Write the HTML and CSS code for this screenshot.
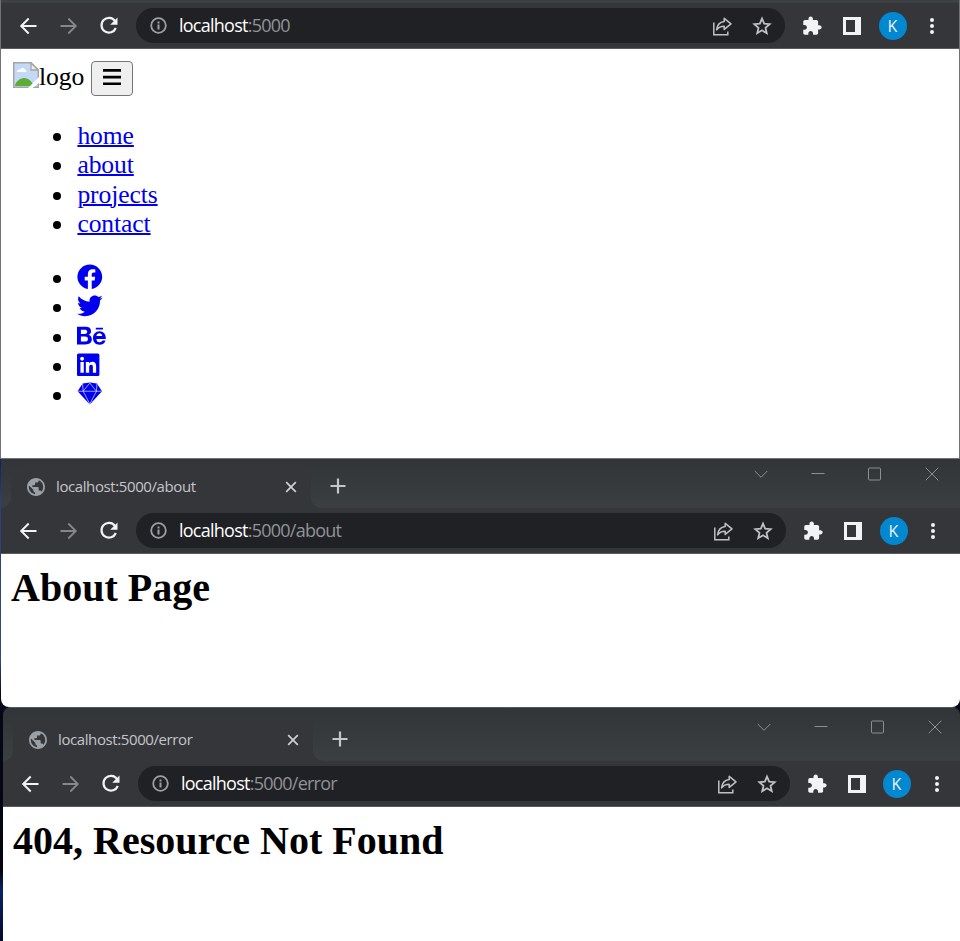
FILE: index.html
```html
<!DOCTYPE html>
<html lang="en">
<head>
<meta charset="utf-8">
<title>localhost:5000</title>
<link rel="stylesheet" href="styles.css">
</head>
<body>
<svg class="sprite" width="0" height="0" aria-hidden="true">
  <symbol id="back" viewBox="0 0 24 24"><path d="M20.500 12H5.500M12.700 4.500L5.200 12l7.500 7.500" fill="none" stroke="currentColor" stroke-width="2"/></symbol>
  <symbol id="forward" viewBox="0 0 24 24"><path d="M3.500 12h15M11.300 4.500l7.500 7.500-7.500 7.500" fill="none" stroke="currentColor" stroke-width="1.800"/></symbol>
  <symbol id="reload" viewBox="0 0 24 24"><path d="M18 7A7.400 7.400 0 1 0 18.800 14" fill="none" stroke="currentColor" stroke-width="2.200"/><path d="M20.500 3.500v7.300h-7.300z" fill="currentColor"/></symbol>
  <symbol id="info" viewBox="0 0 18 18"><circle cx="8.500" cy="8.500" r="7.300" fill="none" stroke="currentColor" stroke-width="1.800"/><path d="M7.500 7.500h2v5h-2zM7.500 4.500h2v1.900h-2z" fill="currentColor"/></symbol>
  <symbol id="share" viewBox="0 0 24 24"><path d="M3.800 8.500v12.200h14V17.500" fill="none" stroke="currentColor" stroke-width="1.500"/><path d="M14.200 4.300l6.800 5.500-6.800 5.600v-3.200c-3.700 0-5.800 1-7.600 3.700.4-4.900 3-7.700 7.600-8.400z" fill="none" stroke="currentColor" stroke-width="1.500" stroke-linejoin="round"/></symbol>
  <symbol id="star" viewBox="0 0 24 24"><path d="M12 4.600l2.150 5.100 5.500.5-4.150 3.600 1.250 5.400L12 16.350 7.250 19.200l1.250-5.400-4.150-3.600 5.500-.5z" fill="none" stroke="currentColor" stroke-width="1.800"/></symbol>
  <symbol id="puzzle" viewBox="0 0 24 24"><path fill="currentColor" d="M20.5 11H19V7c0-1.100-.9-2-2-2h-4V3.500C13 2.120 11.880 1 10.500 1S8 2.120 8 3.500V5H4c-1.100 0-1.990.9-1.990 2v3.800H3.500c1.490 0 2.700 1.210 2.700 2.700s-1.210 2.700-2.700 2.700H2V20c0 1.100.9 2 2 2h3.800v-1.500c0-1.490 1.210-2.700 2.700-2.700s2.700 1.210 2.700 2.700V22H17c1.100 0 2-.9 2-2v-4h1.500c1.380 0 2.500-1.120 2.500-2.500S21.880 11 20.500 11z"/></symbol>
  <symbol id="panel" viewBox="0 0 24 24"><path fill="currentColor" fill-rule="evenodd" d="M3 3h18v18H3zM6 6v12h9V6z"/></symbol>
  <symbol id="dots" viewBox="0 0 24 24"><g fill="currentColor"><circle cx="12" cy="6" r="2"/><circle cx="12" cy="12" r="2"/><circle cx="12" cy="18" r="2"/></g></symbol>
  <symbol id="globe" viewBox="2 2 20 20"><path fill="currentColor" d="M12 2C6.480 2 2 6.480 2 12s4.480 10 10 10 10-4.480 10-10S17.520 2 12 2zm-1 17.930c-3.950-.49-7-3.850-7-7.930 0-.62.08-1.210.21-1.790L9 15v1c0 1.100.9 2 2 2v1.930zm6.900-2.540c-.26-.81-1-1.390-1.900-1.390h-1v-3c0-.55-.45-1-1-1H8v-2h2c.55 0 1-.45 1-1V7h2c1.100 0 2-.9 2-2v-.41c2.930 1.190 5 4.060 5 7.410 0 2.080-.8 3.970-2.100 5.390z"/></symbol>
  <symbol id="close" viewBox="0 0 12 12"><path d="M1.200 1.200l9.600 9.600M10.800 1.200L1.200 10.800" stroke="currentColor" stroke-width="1.700"/></symbol>
  <symbol id="plus" viewBox="0 0 16 16"><path d="M8 .5v15M.5 8h15" stroke="currentColor" stroke-width="2.200"/></symbol>
  <symbol id="w-chevron" viewBox="0 0 14 14"><path d="M.7 4l6.300 6.300L13.300 4" fill="none" stroke="currentColor"/></symbol>
  <symbol id="w-min" viewBox="0 0 14 14"><path d="M.5 6.500h13" stroke="currentColor"/></symbol>
  <symbol id="w-max" viewBox="0 0 14 14"><rect x=".5" y="1" width="12" height="12" rx="1" fill="none" stroke="currentColor"/></symbol>
  <symbol id="w-close" viewBox="0 0 14 14"><path d="M.7.7l12.600 12.600M13.300.7L.7 13.300" stroke="currentColor"/></symbol>
</svg>

<section class="window window-home">
  <div class="strip-edge"></div>
  <div class="toolbar">
    <svg class="ico back"><use href="#back"/></svg>
    <svg class="ico forward"><use href="#forward"/></svg>
    <svg class="ico reload"><use href="#reload"/></svg>
    <div class="omnibox">
      <svg class="info"><use href="#info"/></svg>
      <div class="url"><b>localhost</b>:5000</div>
      <svg class="ico"><use href="#share"/></svg>
      <svg class="ico star"><use href="#star"/></svg>
    </div>
    <svg class="ico puzzle"><use href="#puzzle"/></svg>
    <svg class="ico panel"><use href="#panel"/></svg>
    <div class="avatar">K</div>
    <svg class="ico dots"><use href="#dots"/></svg>
  </div>
  <main class="page">
    <div class="nav-head">
      <svg class="broken" viewBox="0 0 26 26">
        <path d="M1 1h17l7 7v17H1z" fill="#c5d8f6"/>
        <path d="M4 10c0-2 2-3 3-2 1-3 5-2 5 0 2 0 2 2 1 2z" fill="#fff"/>
        <path d="M2 24c0-4 5-8 9-8 5 0 8 4 10 8z" fill="#5aad35"/>
        <path d="M.7 .7H18l7.300 7.300v17.300H.7z" fill="none" stroke="#a5a5a5" stroke-width="1.500"/>
        <path d="M18 1v7h7z" fill="#eee" stroke="#a5a5a5" stroke-width="1.300"/>
        <path d="M26 15L15 26h4.500l6.500-5z" fill="#fff"/>
      </svg>
      <span class="alt">logo</span>
      <button class="toggle" aria-label="Menu"><svg viewBox="0 0 20 18"><path d="M1 2.400h18M1 9.100h18M1 15.800h18" stroke="#000" stroke-width="2.600"/></svg></button>
    </div>
    <ul class="links">
      <li><a href="#">home</a></li>
      <li><a href="#">about</a></li>
      <li><a href="#">projects</a></li>
      <li><a href="#">contact</a></li>
    </ul>
    <ul class="social">
      <li><svg class="brand" viewBox="0 0 512 512"><path d="M504 256C504 119 393 8 256 8S8 119 8 256c0 123.780 90.690 226.380 209.250 245V327.690h-63V256h63v-54.640c0-62.150 37-96.480 93.670-96.480 27.140 0 55.520 4.840 55.520 4.840v61h-31.280c-30.800 0-40.410 19.120-40.410 38.730V256h68.780l-11 71.690h-57.780V501C413.310 482.380 504 379.780 504 256z"/></svg></li>
      <li><svg class="brand" viewBox="0 0 512 512"><path d="M459.370 151.716c.325 4.548.325 9.097.325 13.645 0 138.720-105.583 298.558-298.558 298.558-59.452 0-114.680-17.219-161.137-47.106 8.447.974 16.568 1.299 25.340 1.299 49.055 0 94.213-16.568 130.274-44.832-46.132-.975-84.792-31.188-98.112-72.772 6.498.974 12.995 1.624 19.818 1.624 9.421 0 18.843-1.300 27.614-3.573-48.081-9.747-84.143-51.980-84.143-102.985v-1.299c13.969 7.797 30.214 12.670 47.431 13.319-28.264-18.843-46.781-51.005-46.781-87.391 0-19.492 5.197-37.360 14.294-52.954 51.655 63.675 129.300 105.258 216.365 109.807-1.624-7.797-2.599-15.918-2.599-24.040 0-57.828 46.782-104.934 104.934-104.934 30.213 0 57.502 12.670 76.670 33.137 23.715-4.548 46.456-13.320 66.599-25.340-7.798 24.366-24.366 44.833-46.132 57.827 21.117-2.273 41.584-8.122 60.426-16.243-14.292 20.791-32.161 39.308-52.628 54.253z"/></svg></li>
      <li><svg class="brand wide" viewBox="0 0 576 512"><path d="M232 237.200c31.800-15.200 48.400-38.200 48.400-74 0-70.600-52.600-87.800-113.300-87.800H0v354.400h171.800c64.400 0 124.900-30.900 124.900-102.900 0-44.500-21.100-77.400-64.700-89.700zM77.900 135.900H151c28.100 0 53.400 7.900 53.400 40.500 0 30.100-19.700 42.200-47.500 42.200h-79v-82.700zm83.300 233.700H77.900V272h84.900c34.300 0 56 14.300 56 50.600 0 35.800-25.900 47-57.600 47zm358.500-240.700H376V94h143.700v34.900zM576 305.200c0-75.900-44.400-139.200-124.900-139.200-78.200 0-131.300 58.800-131.300 135.800 0 79.900 50.300 134.700 131.300 134.700 60.800 0 100.200-27.400 119.200-85.700h-61.700c-6.700 21.800-34.200 33.300-55.800 33.300-41.500 0-63.400-24.500-63.400-65.300h186.100c.3-4.100.5-8.700.5-13.600zM389.400 260.600c2.300-33.900 24.700-55 58.500-55 35.400 0 53.200 20.800 56.200 55H389.400z"/></svg></li>
      <li><svg class="brand narrow" viewBox="0 0 448 512"><path d="M416 32H31.900C14.300 32 0 46.500 0 64.300v383.400C0 465.500 14.300 480 31.900 480H416c17.600 0 32-14.500 32-32.300V64.300c0-17.800-14.400-32.300-32-32.300zM135.400 416H69V202.200h66.500V416zm-33.200-243c-21.300 0-38.500-17.300-38.500-38.500S80.900 96 102.200 96c21.200 0 38.500 17.300 38.500 38.500 0 21.300-17.200 38.500-38.500 38.500zm282.100 243h-66.400V312c0-24.800-.5-56.700-34.500-56.700-34.600 0-39.900 27-39.900 54.900V416h-66.400V202.200h63.700v29.200h.9c8.900-16.800 30.600-34.500 62.200-34.500 66.500 0 78.900 43.800 78.900 100.900V416z"/></svg></li>
      <li><svg class="brand" viewBox="0.500 0.500 25 25"><path d="M6 3l7-1 7 1 4.900 7.500L13 23.500 1.100 10.500z"/><path d="M1.500 10.500h23M6 3.200l.5 7.300L13 23l6.500-12.500.5-7.300M6.500 10.500L13 2.500l6.500 8" fill="none" stroke="#fff" stroke-width=".6"/></svg></li>
    </ul>
  </main>
</section>

<section class="window window-about">
  <div class="tabstrip">
    <div class="tab">
      <svg class="globe"><use href="#globe"/></svg>
      <span class="tab-title">localhost:5000/about</span>
      <svg class="tab-close"><use href="#close"/></svg>
    </div>
    <svg class="plus"><use href="#plus"/></svg>
    <div class="controls">
      <svg><use href="#w-chevron"/></svg><svg><use href="#w-min"/></svg><svg><use href="#w-max"/></svg><svg><use href="#w-close"/></svg>
    </div>
  </div>
  <div class="toolbar">
    <svg class="ico back"><use href="#back"/></svg>
    <svg class="ico forward"><use href="#forward"/></svg>
    <svg class="ico reload"><use href="#reload"/></svg>
    <div class="omnibox">
      <svg class="info"><use href="#info"/></svg>
      <div class="url"><b>localhost</b>:5000/about</div>
      <svg class="ico"><use href="#share"/></svg>
      <svg class="ico star"><use href="#star"/></svg>
    </div>
    <svg class="ico puzzle"><use href="#puzzle"/></svg>
    <svg class="ico panel"><use href="#panel"/></svg>
    <div class="avatar">K</div>
    <svg class="ico dots"><use href="#dots"/></svg>
  </div>
  <main class="page"><h1>About Page</h1></main>
</section>

<section class="window window-error">
  <div class="tabstrip">
    <div class="tab">
      <svg class="globe"><use href="#globe"/></svg>
      <span class="tab-title">localhost:5000/error</span>
      <svg class="tab-close"><use href="#close"/></svg>
    </div>
    <svg class="plus"><use href="#plus"/></svg>
    <div class="controls">
      <svg><use href="#w-chevron"/></svg><svg><use href="#w-min"/></svg><svg><use href="#w-max"/></svg><svg><use href="#w-close"/></svg>
    </div>
  </div>
  <div class="toolbar">
    <svg class="ico back"><use href="#back"/></svg>
    <svg class="ico forward"><use href="#forward"/></svg>
    <svg class="ico reload"><use href="#reload"/></svg>
    <div class="omnibox">
      <svg class="info"><use href="#info"/></svg>
      <div class="url"><b>localhost</b>:5000/error</div>
      <svg class="ico"><use href="#share"/></svg>
      <svg class="ico star"><use href="#star"/></svg>
    </div>
    <svg class="ico puzzle"><use href="#puzzle"/></svg>
    <svg class="ico panel"><use href="#panel"/></svg>
    <div class="avatar">K</div>
    <svg class="ico dots"><use href="#dots"/></svg>
  </div>
  <main class="page"><h1>404, Resource Not Found</h1></main>
</section>
</body>
</html>
```
FILE: styles.css
```css
* { box-sizing: border-box; }

body {
  margin: 0;
  height: 941px;
  overflow: hidden;
  display: flex;
  flex-direction: column;
  background: linear-gradient(#101c66 0, #101c66 459px, #2c3f7d 500px, #33487f 660px, #060818 695px, #03040f 870px, #0a2266 890px, #040a30 941px);
  font-family: "Open Sans", "Noto Sans", sans-serif;
}

.sprite { display: none; }
svg { display: block; flex: none; }

.window { display: flex; flex-direction: column; flex: none; }
.window-home { height: 459px; border: 1px solid #727272; border-top: 0; }
.window-about { height: 248px; margin-left: 1px; border-radius: 0 0 8px 8px; overflow: hidden; }
.window-error { height: 234px; margin-left: 3px; border-radius: 8px 8px 0 0; overflow: hidden; }

.strip-edge { height: 3px; background: #3e4144; }

/* Tab strip */
.tabstrip {
  display: flex;
  align-items: flex-start;
  height: 49px;
  padding: 6px 0 0 10px;
  background: linear-gradient(#313537, #3b3f41);
}
.window-error .tabstrip { height: 54px; padding-top: 10px; border-top: 1px solid #55585a; }

.tab {
  position: relative;
  display: flex;
  align-items: center;
  width: 300px;
  height: 43px;
  padding: 0 14px 0 16px;
  border-radius: 9px 9px 0 0;
  background: #35363a;
  color: #c3c5c8;
}
.tab::before, .tab::after {
  content: "";
  position: absolute;
  bottom: 0;
  width: 10px;
  height: 10px;
}
.tab::before { left: -10px; background: radial-gradient(circle at 0 0, transparent 9.5px, #35363a 10px); }
.tab::after { right: -10px; background: radial-gradient(circle at 100% 0, transparent 9.5px, #35363a 10px); }
.globe { width: 18px; height: 18px; color: #9aa0a6; }
.tab-title { flex: 1; margin: -2px 0 0 11px; font-size: 15px; letter-spacing: -0.4px; line-height: 20px; white-space: nowrap; }
.tab-close { width: 12px; height: 12px; color: #d0d1d3; }
.plus { width: 16px; height: 16px; margin: 13px 0 0 19px; color: #c4c6c8; }
.controls { display: flex; gap: 43px; margin: 2px 21px 0 auto; color: #8c8f91; }
.controls svg { width: 14px; height: 14px; }
.window-error .tab { height: 43px; }
.window-error .controls { margin: 2px 18px 0 auto; }

/* Toolbar */
.toolbar {
  display: flex;
  align-items: center;
  height: 46px;
  padding: 0 15px;
  background: #35363a;
  border-bottom: 1px solid #5b5b5e;
  color: #f1f3f4;
}
.window-error .toolbar { padding-right: 11px; }
.ico { width: 24px; height: 24px; }
.forward { margin: 0 16px 0 17px; color: #86878a; }
.omnibox {
  flex: 1;
  display: flex;
  align-items: center;
  height: 35px;
  margin: 0 15px;
  padding: 0 11px 0 14px;
  border-radius: 18px;
  background: #202124;
  color: #bdc1c6;
}
.info { width: 18px; height: 18px; color: #9aa0a6; }
.url { flex: 1; margin: -2px 0 0 11px; font-size: 18px; letter-spacing: -0.75px; line-height: 24px; color: #909397; white-space: nowrap; }
.url b { font-weight: 400; color: #fff; }
.star { margin-left: 16px; }
.puzzle { padding: 1.500px; }
.panel { margin: 0 15px 0 16px; }
.avatar {
  width: 28px;
  height: 28px;
  padding-right: 1px;
  border-radius: 50%;
  background: #0288d1;
  font-size: 16px;
  line-height: 28px;
  text-align: center;
}
.dots { margin-left: 13px; }
.window-error .avatar { margin: 0 1px 0 -1px; }

/* Page contents */
.page { flex: 1; background: #fff; color: #000; font-family: "Liberation Serif", "Times New Roman", serif; font-size: 25.600px; }
.nav-head { display: flex; height: 48px; padding: 12px 0 0 12px; }
.broken { width: 26px; height: 26px; margin-top: 1px; }
.alt { line-height: 32px; letter-spacing: -0.1px; }
.toggle {
  display: flex;
  align-items: flex-start;
  justify-content: center;
  width: 42px;
  height: 35px;
  margin-left: 7px;
  padding: 6px 0 0;
  border: 1px solid #767676;
  border-radius: 4px;
  background: #efefef;
}
.toggle svg { width: 20px; height: 18px; }
.links, .social { margin: 24px 0 0; padding: 0 0 0 74px; line-height: 29.300px; }
.social { margin-top: 25px; }
li { padding-left: 2.400px; }
.links a { color: #00e; letter-spacing: -0.1px; text-decoration-thickness: 2px; }
.social li { height: 29.200px; }
.brand { display: inline-block; width: 25.600px; height: 25.600px; fill: #00e; vertical-align: -3.700px; }
.brand.wide { width: 28.800px; }
.brand.narrow { width: 22.400px; }
h1 { margin: 0; padding: 11px 0 0 10px; font-size: 40px; line-height: 46px; }
```
